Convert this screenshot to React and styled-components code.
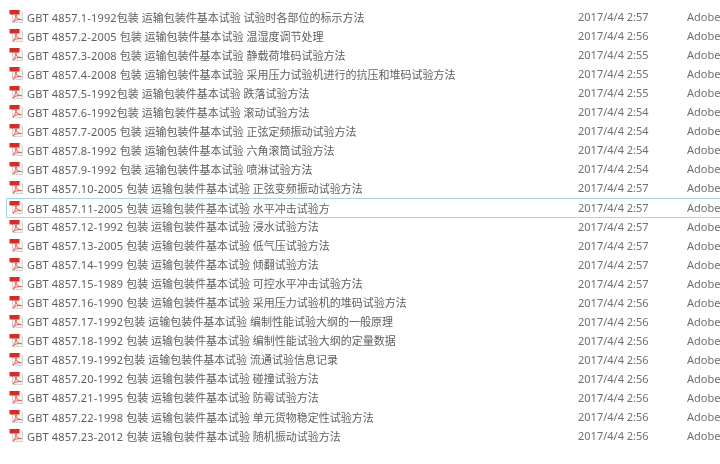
import styled, { createGlobalStyle } from 'styled-components';

const GlobalStyle = createGlobalStyle`
  html, body {
    margin: 0;
    padding: 0;
    background: #fff;
    overflow: hidden;
  }
`;

const List = styled.div`
  width: 720px;
  height: 464px;
  padding-top: 7px;
  box-sizing: border-box;
  overflow: hidden;
  font-family: "Noto Sans", "Noto Sans CJK SC", sans-serif;
  font-size: 11px;
  color: #5f5f5f;
  filter: blur(0.3px);
`;

const Row = styled.div`
  display: flex;
  align-items: center;
  height: ${(p) => (p.$selected ? '20px' : '19.05px')};
  margin: ${(p) => (p.$selected ? '0.5px 0 -1.45px 6px' : '0 0 0 6px')};
  padding-left: 2px;
  box-sizing: border-box;
  white-space: nowrap;
  border: 1px solid ${(p) => (p.$selected ? '#a9d3e8' : 'transparent')};
  border-right: none;
`;

const Icon = styled.svg`
  width: 15px;
  height: 15px;
  flex: none;
  margin-right: 3px;
`;

const Name = styled.span`
  width: 551px;
  flex: none;
  overflow: hidden;
`;

const Code = styled.span`
  letter-spacing: 0.17px;
`;

const Modified = styled.span`
  width: 109px;
  flex: none;
  color: #707070;
`;

const Kind = styled.span`
  flex: none;
  color: #707070;
`;

const std = '运输包装件基本试验';

const files = [
  ['GBT 4857.1-1992', `包装 ${std} 试验时各部位的标示方法`, '2:57'],
  ['GBT 4857.2-2005', ` 包装 ${std} 温湿度调节处理`, '2:56'],
  ['GBT 4857.3-2008', ` 包装 ${std} 静载荷堆码试验方法`, '2:55'],
  ['GBT 4857.4-2008', ` 包装 ${std} 采用压力试验机进行的抗压和堆码试验方法`, '2:55'],
  ['GBT 4857.5-1992', `包装 ${std} 跌落试验方法`, '2:55'],
  ['GBT 4857.6-1992', `包装 ${std} 滚动试验方法`, '2:54'],
  ['GBT 4857.7-2005', ` 包装 ${std} 正弦定频振动试验方法`, '2:54'],
  ['GBT 4857.8-1992', ` 包装 ${std} 六角滚筒试验方法`, '2:54'],
  ['GBT 4857.9-1992', ` 包装 ${std} 喷淋试验方法`, '2:54'],
  ['GBT 4857.10-2005', ` 包装 ${std} 正弦变频振动试验方法`, '2:57'],
  ['GBT 4857.11-2005', ` 包装 ${std} 水平冲击试验方`, '2:57', true],
  ['GBT 4857.12-1992', ` 包装 ${std} 浸水试验方法`, '2:57'],
  ['GBT 4857.13-2005', ` 包装 ${std} 低气压试验方法`, '2:57'],
  ['GBT 4857.14-1999', ` 包装 ${std} 倾翻试验方法`, '2:57'],
  ['GBT 4857.15-1989', ` 包装 ${std} 可控水平冲击试验方法`, '2:57'],
  ['GBT 4857.16-1990', ` 包装 ${std} 采用压力试验机的堆码试验方法`, '2:56'],
  ['GBT 4857.17-1992', `包装 ${std} 编制性能试验大纲的一般原理`, '2:56'],
  ['GBT 4857.18-1992', ` 包装 ${std} 编制性能试验大纲的定量数据`, '2:56'],
  ['GBT 4857.19-1992', `包装 ${std} 流通试验信息记录`, '2:56'],
  ['GBT 4857.20-1992', ` 包装 ${std} 碰撞试验方法`, '2:56'],
  ['GBT 4857.21-1995', ` 包装 ${std} 防霉试验方法`, '2:56'],
  ['GBT 4857.22-1998', ` 包装 ${std} 单元货物稳定性试验方法`, '2:56'],
  ['GBT 4857.23-2012', ` 包装 ${std} 随机振动试验方法`, '2:56'],
];

function PdfIcon() {
  return (
    <Icon viewBox="0 0 15 15">
      <path d="M3.5 1.5h7.5l2.5 2.5v9.5h-10z" fill="#f7f5f3" stroke="#d6d2ce" strokeWidth="1" />
      <rect x="0.5" y="1" width="10" height="4.5" fill="#d42c26" />
      <path d="M6 5.5c.6 3 2.5 5 6.5 5.2-3-.6-6.5.3-8.5 2.3 1.5-2 3.2-4.5 3.6-7.5" fill="none" stroke="#e0544c" strokeWidth="0.9" />
    </Icon>
  );
}

export default function App() {
  return (
    <>
      <GlobalStyle />
      <List>
        {files.map(([code, title, time, selected]) => (
          <Row key={code} $selected={selected}>
            <PdfIcon />
            <Name>
              <Code>{code}</Code>
              {title}
            </Name>
            <Modified>2017/4/4 {time}</Modified>
            <Kind>Adobe</Kind>
          </Row>
        ))}
      </List>
    </>
  );
}
